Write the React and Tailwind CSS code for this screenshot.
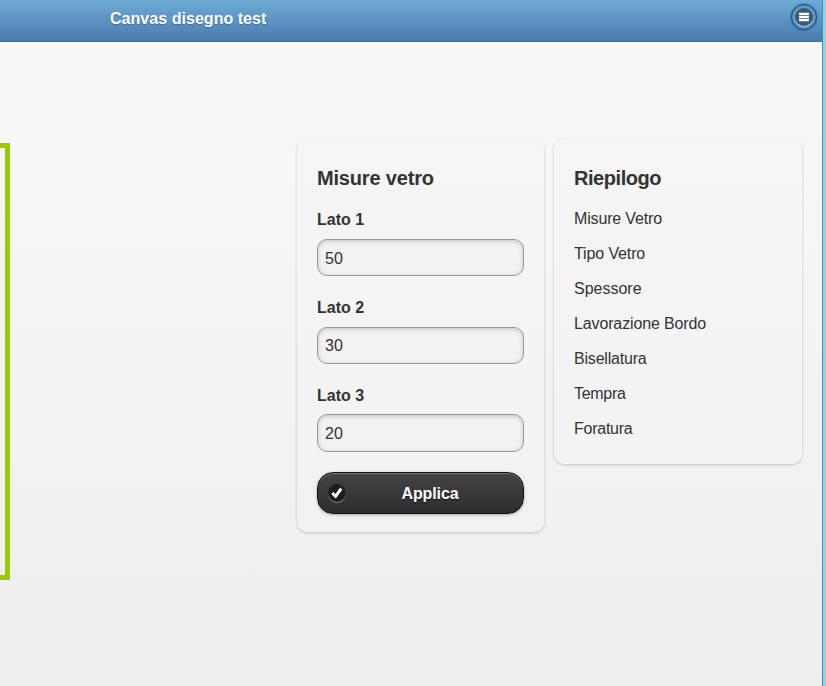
const fields = [
  { label: "Lato 1", value: "50", labelClass: "", inputClass: "h-[37px] pt-[3px]" },
  { label: "Lato 2", value: "30", labelClass: "", inputClass: "h-[37px] pt-[1px]" },
  { label: "Lato 3", value: "20", labelClass: "pt-[1px] -mb-[1px]", inputClass: "h-[38px] pt-[1px]" },
];

const summary = [
  { name: "Misure Vetro", tracking: "tracking-[-0.16px]" },
  { name: "Tipo Vetro", tracking: "tracking-[-0.12px]" },
  { name: "Spessore", tracking: "tracking-normal" },
  { name: "Lavorazione Bordo", tracking: "tracking-[-0.13px]" },
  { name: "Bisellatura", tracking: "tracking-[-0.2px]" },
  { name: "Tempra", tracking: "tracking-[-0.3px]" },
  { name: "Foratura", tracking: "tracking-[-0.25px]" },
];

function Header() {
  return (
    <header className="flex h-[42px] items-start justify-between border-b border-[#456f9a] bg-gradient-to-b from-[#6facd5] to-[#497bae] pl-[110px] pr-[5px]">
      <h1 className="pt-[9px] text-[16px] leading-[20px] font-bold tracking-[0.04px] text-white [text-shadow:0_1px_1px_#3e6790]">
        Canvas disegno test
      </h1>
      <button
        aria-label="Menu"
        className="mt-[4px] flex size-[26px] items-center justify-center rounded-full border border-[#0d5078] bg-gradient-to-b from-[#5f9cc5] to-[#5f9bcf] shadow-[0_0_2px_#145072,inset_0_0_1px_#145072]"
      >
        <span className="flex size-[18px] items-center justify-center rounded-full bg-[#3b5a78] shadow-[0_1px_0_rgba(255,255,255,0.4)]">
          <svg className="shrink-0" width="10" height="10" viewBox="0 0 10 10" fill="#fff">
            <path d="M0 .7h10v2.4H0zM0 3.8h10v2.4H0zM0 6.9h10v2.4H0z" />
          </svg>
        </span>
      </button>
    </header>
  );
}

function Card({ title, titleClass, className, children }) {
  return (
    <section
      className={`rounded-[10px] bg-[#f4f4f4]/50 px-[20px] pt-[28px] shadow-[0_1px_3px_rgba(0,0,0,0.2)] ${className}`}
    >
      <h2 className={`text-[20px] leading-[24px] font-bold ${titleClass}`}>{title}</h2>
      {children}
    </section>
  );
}

export default function App() {
  return (
    <div className="flex h-[686px] w-[826px] overflow-hidden font-['Liberation_Sans',Arial,sans-serif] text-[#333] [text-shadow:0_1px_0_#f3f3f3]">
      <div className="flex min-w-0 flex-1 flex-col">
        <Header />
        <main className="flex flex-1 items-start bg-gradient-to-b from-[#f8f8f8] to-[#eeeeee]">
          <div className="mt-[101px] h-[437px] w-[10px] border-y-[5px] border-r-[5px] border-[#99cc00]" />
          <Card title="Misure vetro" titleClass="tracking-[-0.18px]" className="mt-[96px] ml-[287px] h-[394px] w-[247px]">
            <div className="mt-[20px]">
              {fields.map((f) => (
                <div key={f.label} className="h-[87.7px]">
                  <label className={`block text-[16px] leading-[20px] font-bold ${f.labelClass}`}>{f.label}</label>
                  <input
                    defaultValue={f.value}
                    className={`mt-[9px] block w-[207px] rounded-[10px] border border-[#999] bg-[#f2f2f2] px-[7px] text-[16px] shadow-[inset_0_1px_4px_rgba(0,0,0,0.2)] outline-none ${f.inputClass}`}
                  />
                </div>
              ))}
            </div>
            <button className="-mt-[1px] flex h-[42px] w-[207px] items-center rounded-[16px] border border-[#111] bg-gradient-to-b from-[#444] to-[#2d2d2d] px-[10px] text-[16px] font-bold text-white shadow-[0_1px_3px_rgba(0,0,0,0.3),inset_0_1px_0_rgba(255,255,255,0.3)] [text-shadow:0_1px_1px_#111]">
              <span className="flex size-[18px] items-center justify-center rounded-full bg-[#1e1e1e] shadow-[0_1px_0_rgba(255,255,255,0.4)]">
                <svg width="12" height="12" viewBox="0 0 12 12" fill="none" stroke="#fff" strokeWidth="3">
                  <path d="M1.3 6 4.6 9.3 10.2 1.7" />
                </svg>
              </span>
              <span className="flex-1 pt-[2px] pl-[1px] text-center tracking-[-0.1px]">Applica</span>
            </button>
          </Card>
          <Card title="Riepilogo" titleClass="tracking-[-0.45px]" className="mt-[96px] ml-[10px] h-[326px] w-[248px]">
            <ul className="mt-[19px] flex flex-col gap-[15px] text-[16px] leading-[20px]">
              {summary.map((item) => (
                <li key={item.name} className={item.tracking}>
                  {item.name}
                </li>
              ))}
            </ul>
          </Card>
        </main>
      </div>
      <div className="w-[4px] shrink-0 border-l border-[#548e98] bg-[#85d8e5]" />
    </div>
  );
}
